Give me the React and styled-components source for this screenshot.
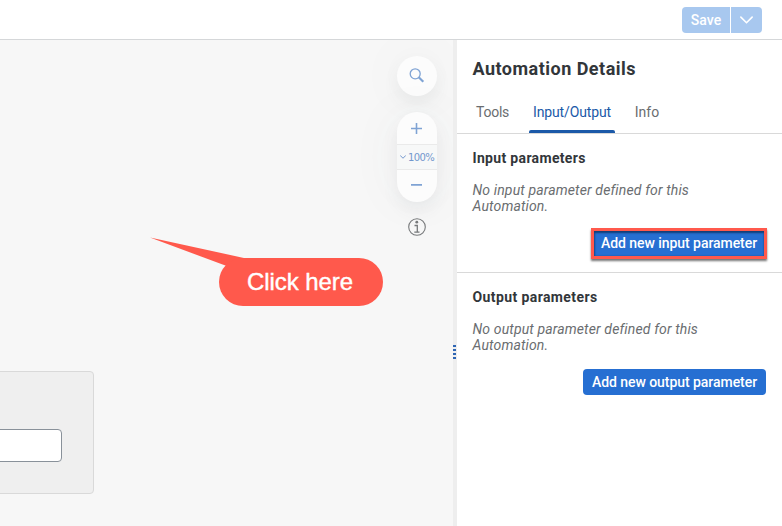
import React from "react";
import styled, { createGlobalStyle } from "styled-components";

const GlobalStyle = createGlobalStyle`
  *, *::before, *::after { box-sizing: border-box; }
  body { margin: 0; background: #fff; overflow: hidden; }
  button { font: inherit; border: 0; padding: 0; margin: 0; cursor: pointer; }
  h2, h3, p { margin: 0; }
`;

const Page = styled.div`
  width: 782px;
  height: 526px;
  display: flex;
  flex-direction: column;
  font-family: Roboto, "Noto Sans", sans-serif;
  font-size: 14px;
  color: #32363a;
`;

const Header = styled.header`
  height: 40px;
  flex: none;
  display: flex;
  justify-content: flex-end;
  padding: 7px 20px 0 0;
  border-bottom: 1px solid #d5d7d9;
  background: #fff;
`;

const SplitButton = styled.div`
  display: flex;
  gap: 1px;
  height: 26px;
`;

const SplitPart = styled.button`
  width: ${(p) => p.$width}px;
  display: flex;
  align-items: center;
  justify-content: center;
  background: #a8c8ef;
  color: #fff;
  font-weight: 500;
  border-radius: ${(p) => (p.$end ? "0 4px 4px 0" : "4px 0 0 4px")};
`;

const Body = styled.div`
  flex: 1;
  display: flex;
  min-height: 0;
`;

const Canvas = styled.main`
  position: relative;
  width: 453px;
  flex: none;
  overflow: hidden;
  background: #f7f7f7;
`;

const Node = styled.div`
  position: absolute;
  left: -10px;
  top: 331px;
  width: 104px;
  height: 123px;
  padding: 57px 31px 0 0;
  border: 1px solid #d9d9d9;
  border-radius: 4px;
  background: #efefef;
`;

const NodeField = styled.div`
  height: 33px;
  border: 1px solid #89919a;
  border-radius: 4px;
  background: #fff;
`;

const Callout = styled.div`
  position: absolute;
  left: 149px;
  top: 197px;
  width: 234px;
  height: 69px;
`;

const CalloutLabel = styled.div`
  position: absolute;
  left: 70px;
  top: 21px;
  width: 163.5px;
  height: 48px;
  padding-right: 1.5px;
  display: flex;
  align-items: center;
  justify-content: center;
  border-radius: 24px;
  background: #ff594c;
  color: #fff;
  font: 24px "Liberation Sans", Arial, sans-serif;
  letter-spacing: -0.05px;
  -webkit-text-stroke: 0.4px #fff;
`;

const Pointer = styled.svg`
  position: absolute;
  left: 0;
  top: 0;
`;

const CanvasTools = styled.div`
  position: absolute;
  top: 16px;
  right: 16px;
  width: 40px;
  display: flex;
  flex-direction: column;
  align-items: center;
  gap: 16px;
`;

const RoundTool = styled.button`
  width: 40px;
  height: 40px;
  display: flex;
  align-items: center;
  justify-content: center;
  border-radius: 20px;
  background: #fcfcfc;
  box-shadow: 0 8px 16px rgba(85, 95, 105, 0.07), 0 0 54px rgba(85, 95, 105, 0.05);
`;

const ZoomTool = styled.div`
  width: 40px;
  height: 90px;
  display: flex;
  flex-direction: column;
  overflow: hidden;
  border-radius: 20px;
  background: #fcfcfc;
  box-shadow: 0 8px 16px rgba(85, 95, 105, 0.08), 0 0 54px rgba(85, 95, 105, 0.05);
`;

const ZoomStep = styled.button`
  height: 32px;
  display: flex;
  align-items: center;
  justify-content: center;
  background: transparent;
`;

const ZoomLevel = styled.button`
  height: 26px;
  display: flex;
  align-items: center;
  justify-content: center;
  gap: 2px;
  border-top: 1px solid #eaeaea;
  border-bottom: 1px solid #eaeaea;
  background: #f7f8f8;
  color: #7397cd;
  font: 10px "DejaVu Sans", sans-serif;
  letter-spacing: -0.6px;
`;

const InfoTool = styled.div`
  height: 18px;
  display: flex;
`;

const Splitter = styled.div`
  width: 4px;
  flex: none;
  display: flex;
  flex-direction: column;
  align-items: flex-start;
  gap: 2px;
  padding-top: 305px;
  background: #eee;
`;

const Grip = styled.span`
  width: 3px;
  height: 2px;
  background: #2f66b4;
`;

const Panel = styled.aside`
  flex: 1;
  background: #fff;
`;

const Title = styled.h2`
  height: 58px;
  padding: 0 16px 0 15.5px;
  font-size: 18px;
  line-height: 58px;
  font-weight: 700;
  letter-spacing: 0.48px;
`;

const Tabs = styled.nav`
  height: 36px;
  display: flex;
  gap: 16px;
  padding: 0 15px;
  border-bottom: 1px solid #d9d9d9;
`;

const Tab = styled.button`
  position: relative;
  width: ${(p) => p.$width}px;
  height: 35px;
  background: transparent;
  line-height: 28px;
  display: flex;
  justify-content: center;
  letter-spacing: ${(p) => p.$tracking || 0}px;
  color: ${(p) => (p.$active ? "#1b59a8" : "#6a6d70")};
  &::after {
    content: "";
    display: ${(p) => (p.$active ? "block" : "none")};
    position: absolute;
    left: 0;
    right: 0;
    bottom: 0;
    height: 3px;
    border-radius: 2px 2px 0 0;
    background: #1b59a8;
  }
`;

const Section = styled.section`
  height: 139px;
  display: flex;
  flex-direction: column;
  padding: 16px 16px 0 15.5px;
  border-bottom: ${(p) => (p.$last ? "0" : "1px solid #d9d9d9")};
`;

const SectionTitle = styled.h3`
  font-size: 14px;
  line-height: 16px;
  font-weight: 700;
  letter-spacing: ${(p) => p.$tracking}px;
`;

const Note = styled.p`
  margin-top: 16px;
  line-height: 16px;
  font-style: italic;
  color: #6a6d70;
  letter-spacing: 0.14px;
`;

const Action = styled.button`
  align-self: flex-end;
  flex: none;
  width: ${(p) => (p.$marked ? 176 : 183)}px;
  height: ${(p) => (p.$marked ? 31 : 26)}px;
  margin-top: ${(p) => (p.$marked ? 14 : 16)}px;
  margin-right: ${(p) => (p.$marked ? -1 : 0)}px;
  border: ${(p) => (p.$marked ? "3px solid #ff594c" : "0")};
  border-radius: ${(p) => (p.$marked ? 0 : 4)}px;
  background: #266fd2;
  box-shadow: ${(p) =>
    p.$marked ? "inset 0 2px 2px #123e78, inset 1px 0 2px #1a509a, 0 2px 2px rgba(0,0,0,.55)" : "none"};
  color: #fff;
  font-weight: 500;
  letter-spacing: -0.05px;
  line-height: 25px;
  white-space: nowrap;
`;

const Chevron = ({ size, height, width = 1.5 }) => (
  <svg width={size} height={height} viewBox="0 0 12 7" fill="none" stroke="currentColor" strokeWidth={width} strokeLinecap="round">
    <path d="M.8.8 6 6 11.2.8" />
  </svg>
);

export default function App() {
  return (
    <>
      <GlobalStyle />
      <Page>
        <Header>
          <SplitButton>
            <SplitPart $width={48}>Save</SplitPart>
            <SplitPart $width={31} $end aria-label="More save options">
              <Chevron size={13} height={8} />
            </SplitPart>
          </SplitButton>
        </Header>
        <Body>
          <Canvas>
            <Node><NodeField /></Node>
            <CanvasTools>
              <RoundTool aria-label="Search">
                <svg width="16" height="16" viewBox="0 0 16 16" fill="none" stroke="#7fa3d4">
                  <circle cx="6.2" cy="5.8" r="5" strokeWidth="1.3" />
                  <path d="m9.7 9.3 4.6 4.5" strokeWidth="2.2" />
                </svg>
              </RoundTool>
              <ZoomTool>
                <ZoomStep aria-label="Zoom in">
                  <svg width="12" height="12" viewBox="0 0 12 12" stroke="#7fa3d4" strokeWidth="1.6">
                    <path d="M5.5 1v11M0 6.5h11" />
                  </svg>
                </ZoomStep>
                <ZoomLevel>
                  <Chevron size={6} height={4} width={2} />
                  100%
                </ZoomLevel>
                <ZoomStep aria-label="Zoom out">
                  <svg width="12" height="12" viewBox="0 0 12 12" stroke="#7fa3d4" strokeWidth="1.8">
                    <path d="M0 4.9h11" />
                  </svg>
                </ZoomStep>
              </ZoomTool>
              <InfoTool>
                <svg width="18" height="18" viewBox="0 0 18 18" fill="none" stroke="#77797b">
                  <circle cx="9" cy="9" r="8.3" strokeWidth="1.1" />
                  <circle cx="8.8" cy="4.2" r="1.4" fill="#77797b" stroke="none" />
                  <path d="M6.5 7.5h2.8V14M6.3 14.2h5.2" strokeWidth="1.3" />
                </svg>
              </InfoTool>
            </CanvasTools>
            <Callout>
              <Pointer width="100" height="32" viewBox="0 0 100 32">
                <path d="M1 .5 96 21.2V30H82L77 28.8Z" fill="#ff594c" />
              </Pointer>
              <CalloutLabel>Click here</CalloutLabel>
            </Callout>
          </Canvas>
          <Splitter><Grip /><Grip /><Grip /><Grip /></Splitter>
          <Panel>
            <Title>Automation Details</Title>
            <Tabs>
              <Tab $width={41} $tracking={-0.25}>Tools</Tab>
              <Tab $width={86} $tracking={-0.14} $active>Input/Output</Tab>
              <Tab $width={32}>Info</Tab>
            </Tabs>
            <Section>
              <SectionTitle $tracking={0.33}>Input parameters</SectionTitle>
              <Note>No input parameter defined for this<br />Automation.</Note>
              <Action $marked>Add new input parameter</Action>
            </Section>
            <Section $last>
              <SectionTitle $tracking={0.4}>Output parameters</SectionTitle>
              <Note>No output parameter defined for this<br />Automation.</Note>
              <Action>Add new output parameter</Action>
            </Section>
          </Panel>
        </Body>
      </Page>
    </>
  );
}
